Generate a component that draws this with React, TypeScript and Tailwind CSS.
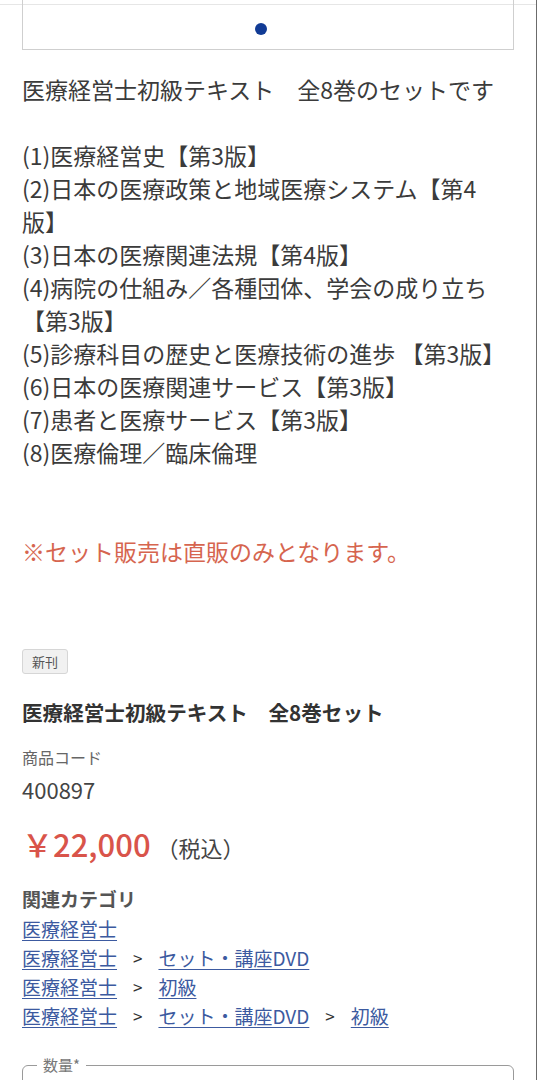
import React from 'react';

const bodyLines: { text: string; red?: boolean }[] = [
  { text: '医療経営士初級テキスト　全8巻のセットです' },
  { text: '' },
  { text: '(1)医療経営史【第3版】' },
  { text: '(2)日本の医療政策と地域医療システム【第4' },
  { text: '版】' },
  { text: '(3)日本の医療関連法規【第4版】' },
  { text: '(4)病院の仕組み／各種団体、学会の成り立ち' },
  { text: '【第3版】' },
  { text: '(5)診療科目の歴史と医療技術の進歩 【第3版】' },
  { text: '(6)日本の医療関連サービス【第3版】' },
  { text: '(7)患者と医療サービス【第3版】' },
  { text: '(8)医療倫理／臨床倫理' },
  { text: '' },
  { text: '' },
  { text: '※セット販売は直販のみとなります。', red: true },
];

const categories: string[][] = [
  ['医療経営士'],
  ['医療経営士', 'セット・講座DVD'],
  ['医療経営士', '初級'],
  ['医療経営士', 'セット・講座DVD', '初級'],
];

export default function App() {
  return (
    <div
      className="relative min-h-screen w-full bg-white border-r border-[#6b6b6b] text-[#3b3b3b] overflow-hidden"
      style={{ fontFamily: '"Noto Sans CJK JP", "Noto Sans", sans-serif' }}
    >
      {/* faint top rule */}
      <div className="absolute left-0 right-0 top-[4px] h-px bg-[#e6e6e6]" />

      <div className="px-[22px]">
        {/* slider dots box */}
        <div className="relative h-[50px] border-x border-b border-[#cfcfcf] flex items-center justify-center">
          <span className="mr-[14px] mt-[8px] h-[12px] w-[12px] rounded-full bg-[#113b95]" />
        </div>

        {/* description */}
        <div className="mt-[23px] text-[23px] leading-[33px] whitespace-nowrap">
          {bodyLines.map((l, i) => (
            <div key={i} className={l.red ? 'text-[#d6654f]' : ''}>
              {l.text || '\u00a0'}
            </div>
          ))}
        </div>

        {/* badge */}
        <div className="mt-[80px]">
          <span className="inline-flex h-[25px] items-center rounded-[3px] border border-[#d6d6d6] bg-[#f1f1f1] px-[9px] text-[13px] text-[#555]">
            新刊
          </span>
        </div>

        <h1 className="mt-[23px] text-[20.6px] leading-[30px] font-bold text-[#333]">
          医療経営士初級テキスト　全8巻セット
        </h1>

        <div className="mt-[18px] text-[16px] leading-[24px] text-[#666]">商品コード</div>
        <div className="mt-[5px] text-[22px] leading-[30px] text-[#444]">400897</div>

        <div className="mt-[20px] flex items-baseline">
          <span className="text-[31px] leading-[40px] font-medium text-[#d9544a]">￥22,000</span>
          <span className="ml-[6px] text-[22px] text-[#444]">（税込）</span>
        </div>

        <div className="mt-[21px] text-[19px] leading-[28px] font-bold text-[#555]">関連カテゴリ</div>
        <div className="mt-[1px] text-[19px] leading-[29px]">
          {categories.map((row, i) => (
            <div key={i} className="flex items-center whitespace-nowrap">
              {row.map((c, j) => (
                <React.Fragment key={j}>
                  {j > 0 && <span className="mx-[16px] text-[17px] text-[#333]">&gt;</span>}
                  <a href="#" className="text-[#3c5aa0] underline underline-offset-[3px] decoration-1">
                    {c}
                  </a>
                </React.Fragment>
              ))}
            </div>
          ))}
        </div>

        {/* quantity fieldset */}
        <fieldset className="mt-[26px] h-[60px] rounded-[6px] border border-[#9a9a9a] px-[14px]">
          <legend className="px-[6px] text-[15px] leading-[18px] text-[#777]">数量*</legend>
        </fieldset>
      </div>
    </div>
  );
}
